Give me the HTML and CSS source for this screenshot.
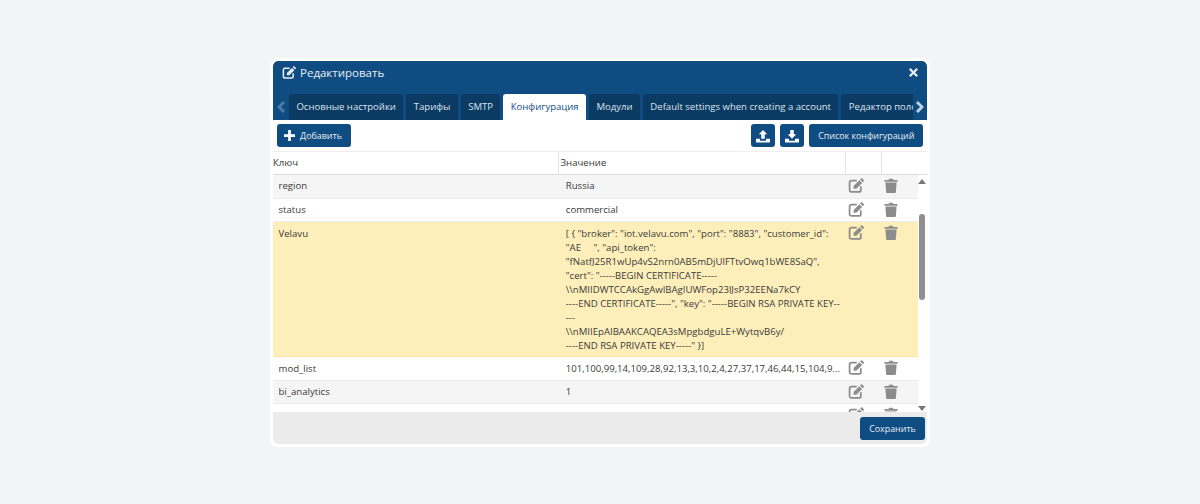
FILE: index.html
```html
<!DOCTYPE html>
<html lang="en">
<head>
  <meta charset="UTF-8">
  <meta name="viewport" content="width=device-width, initial-scale=1.0">
  <title>Редактировать</title>
  <link rel="stylesheet" href="styles.css">
</head>
<body>
  <svg class="defs" width="0" height="0">
    <symbol id="i-edit" viewBox="0 0 20 18">
      <path d="M11 3H4.200A2.200 2.200 0 0 0 2 5.200v9.600A2.200 2.200 0 0 0 4.200 17h9.600a2.200 2.200 0 0 0 2.200-2.200V10" fill="none" stroke="currentColor" stroke-width="2.200"/>
      <path d="M7 9.600V13h3.400l7.200-7.200-3.400-3.400zM15.200 1.400l3.400 3.400 1-1c.5-.5.5-1.100 0-1.600L17.800.400c-.5-.5-1.100-.5-1.600 0z" fill="currentColor"/>
    </symbol>
    <symbol id="i-trash" viewBox="0 0 14 16">
      <path d="M0 2.200h4.400L5 .8h4l.6 1.400H14v1.700H0zM1 4.900h12l-.8 10c0 .6-.5 1.100-1.100 1.100H2.900c-.6 0-1.100-.5-1.100-1.100z" fill="currentColor"/>
    </symbol>
    <symbol id="i-upload" viewBox="0 0 16 16">
      <path d="M8 1l4.800 5H10v5H6V6H3.200zM0 11h4.500v1.500c0 .6.400 1 1 1h5c.6 0 1-.4 1-1V11H16v4.500H0z" fill="currentColor"/>
    </symbol>
    <symbol id="i-download" viewBox="0 0 16 16">
      <path d="M6 1h4v5h2.800L8 11 3.200 6H6zM0 11h4.500v1.500c0 .6.400 1 1 1h5c.6 0 1-.4 1-1V11H16v4.500H0z" fill="currentColor"/>
    </symbol>
  </svg>

  <div class="modal">
    <div class="modal-head">
      <div class="modal-title">
        <svg class="title-icon"><use href="#i-edit"/></svg>
        <span>Редактировать</span>
      </div>
      <svg class="close-icon" viewBox="0 0 10 10"><path d="M1.800 0L5 3.200 8.200 0 10 1.800 6.800 5 10 8.200 8.200 10 5 6.800 1.800 10 0 8.200 3.200 5 0 1.800z" fill="currentColor"/></svg>
    </div>

    <div class="tabs">
      <svg class="tab-arrow dim" viewBox="0 0 8 12"><path d="M6 0l2 2-4 4 4 4-2 2-6-6z" fill="currentColor"/></svg>
      <div class="tab-list">
        <div class="tab">Основные настройки</div>
        <div class="tab">Тарифы</div>
        <div class="tab">SMTP</div>
        <div class="tab active">Конфигурация</div>
        <div class="tab">Модули</div>
        <div class="tab">Default settings when creating a account</div>
        <div class="tab">Редактор полей</div>
      </div>
      <svg class="tab-arrow next" viewBox="0 0 8 12"><path d="M2 0L0 2l4 4-4 4 2 2 6-6z" fill="currentColor"/></svg>
    </div>

    <div class="toolbar">
      <button class="btn btn-add">
        <svg class="plus-icon" viewBox="0 0 12 12"><path d="M4.500 0h3v4.500H12v3H7.500V12h-3V7.500H0v-3h4.500z" fill="currentColor"/></svg>
        Добавить
      </button>
      <div class="toolbar-right">
        <button class="btn btn-icon"><svg><use href="#i-upload"/></svg></button>
        <button class="btn btn-icon"><svg><use href="#i-download"/></svg></button>
        <button class="btn btn-list">Список конфигураций</button>
      </div>
    </div>

    <div class="table-head">
      <div class="th th-key">Ключ</div>
      <div class="th th-val">Значение</div>
      <div class="th th-act"></div>
      <div class="th th-act"></div>
    </div>

    <div class="table-body">
      <div class="rows">
        <div class="row odd">
          <div class="cell key">region</div>
          <div class="cell val">Russia</div>
          <div class="cell act"><svg class="edit"><use href="#i-edit"/></svg></div>
          <div class="cell act"><svg class="trash"><use href="#i-trash"/></svg></div>
        </div>
        <div class="row">
          <div class="cell key">status</div>
          <div class="cell val">commercial</div>
          <div class="cell act"><svg class="edit"><use href="#i-edit"/></svg></div>
          <div class="cell act"><svg class="trash"><use href="#i-trash"/></svg></div>
        </div>
        <div class="row warn">
          <div class="cell key">Velavu</div>
          <div class="cell val multi">[ { "broker": "iot.velavu.com", "port": "8883", "customer_id":
"AE     ", "api_token":
"fNatfJ25R1wUp4vS2nrn0AB5mDjUlFTtvOwq1bWE8SaQ",
"cert": "-----BEGIN CERTIFICATE-----
\\nMIIDWTCCAkGgAwIBAgIUWFop23lJsP32EENa7kCY
----END CERTIFICATE-----", "key": "-----BEGIN RSA PRIVATE KEY--
---
\\nMIIEpAIBAAKCAQEA3sMpgbdguLE+WytqvB6y/
----END RSA PRIVATE KEY-----" }]</div>
          <div class="cell act"><svg class="edit"><use href="#i-edit"/></svg></div>
          <div class="cell act"><svg class="trash"><use href="#i-trash"/></svg></div>
        </div>
        <div class="row">
          <div class="cell key">mod_list</div>
          <div class="cell val">101,100,99,14,109,28,92,13,3,10,2,4,27,37,17,46,44,15,104,9...</div>
          <div class="cell act"><svg class="edit"><use href="#i-edit"/></svg></div>
          <div class="cell act"><svg class="trash"><use href="#i-trash"/></svg></div>
        </div>
        <div class="row odd">
          <div class="cell key">bi_analytics</div>
          <div class="cell val">1</div>
          <div class="cell act"><svg class="edit"><use href="#i-edit"/></svg></div>
          <div class="cell act"><svg class="trash"><use href="#i-trash"/></svg></div>
        </div>
        <div class="row">
          <div class="cell key"></div>
          <div class="cell val"></div>
          <div class="cell act"><svg class="edit"><use href="#i-edit"/></svg></div>
          <div class="cell act"><svg class="trash"><use href="#i-trash"/></svg></div>
        </div>
      </div>
      <div class="scrollbar">
        <div class="sb-up"></div>
        <div class="sb-track"><div class="sb-thumb"></div></div>
        <div class="sb-down"></div>
      </div>
    </div>

    <div class="modal-foot">
      <button class="btn btn-save">Сохранить</button>
    </div>
  </div>
</body>
</html>
```

FILE: styles.css
```css
* {
  box-sizing: border-box;
}
html, body {
  height: 100%;
}
body {
  margin: 0;
  background: #f3f4f6;
  font-family: "Open Sans", "Noto Sans", sans-serif;
  font-size: 9.600px;
  color: #3a3a3a;
  display: flex;
  align-items: center;
  justify-content: center;
}
.defs {
  display: none;
}
.modal {
  width: 660px;
  height: 389px;
  background: #fff;
  border: 3px solid #fff;
  border-radius: 8px;
  display: flex;
  flex-direction: column;
  overflow: hidden;
}
.modal-head {
  height: 32.500px;
  flex: none;
  background: #0f4c81;
  border-radius: 5px 5px 0 0;
  color: #fff;
  display: flex;
  align-items: center;
  justify-content: space-between;
  padding: 0 9px 8px 9px;
}
.modal-title {
  display: flex;
  align-items: center;
  gap: 4px;
  font-size: 11.500px;
  color: #e8eef4;
}
.title-icon {
  width: 14px;
  height: 13px;
}
.close-icon {
  width: 9px;
  height: 9px;
  color: #e8eef4;
}
.tabs {
  height: 27px;
  flex: none;
  background: #0f4c81;
  display: flex;
  align-items: flex-end;
  overflow: hidden;
}
.tab-arrow {
  width: 16px;
  height: 12px;
  flex: none;
  align-self: center;
  color: #c5d3e0;
}
.tab-arrow.dim {
  color: #4d7ba3;
}
.tab-arrow.next {
  width: 14px;
}
.tab-list {
  flex: 1;
  display: flex;
  gap: 3px;
  overflow: hidden;
  min-width: 0;
}
.tab {
  flex: none;
  height: 26px;
  line-height: 25px;
  padding: 0 7.400px;
  background: #0b3a63;
  color: #dbe4ec;
  border-radius: 3px 3px 0 0;
  font-size: 9.550px;
  white-space: nowrap;
}
.tab.active {
  background: #fff;
  color: #0f4c81;
}
.toolbar {
  height: 32px;
  flex: none;
  display: flex;
  align-items: center;
  justify-content: space-between;
  padding: 0 3.700px 0 4px;
  border-bottom: 1px solid #eee;
}
.toolbar-right {
  display: flex;
  gap: 5.500px;
}
.btn {
  height: 23px;
  border: none;
  border-radius: 3px;
  background: #0f4c81;
  color: #e8eef4;
  font-family: inherit;
  font-size: 8.900px;
  padding: 0;
  display: inline-flex;
  align-items: center;
  justify-content: center;
}
.btn-add {
  width: 74px;
  gap: 5px;
  padding-right: 2px;
}
.plus-icon {
  width: 11px;
  height: 11px;
  color: #fff;
}
.btn-icon {
  width: 23.500px;
  color: #fff;
}
.btn-icon svg {
  width: 14px;
  height: 14px;
}
.btn-list {
  width: 114px;
}
.table-head {
  height: 23px;
  flex: none;
  display: flex;
  border-bottom: 1px solid #ddd;
  background: #fff;
}
.th {
  line-height: 22px;
  border-right: 1px solid #e4e4e4;
}
.th-key {
  width: 285.500px;
}
.th-val {
  width: 287.500px;
  padding-left: 2px;
}
.th-act {
  width: 36px;
}
.th-act:last-child {
  border-right: none;
  flex: 1;
}
.table-body {
  flex: 1;
  min-height: 0;
  display: flex;
  overflow: hidden;
}
.rows {
  flex: 1;
  min-width: 0;
  overflow: hidden;
}
.row {
  display: flex;
  height: 23.600px;
  border-bottom: 1px solid #ececec;
}
.row.odd {
  background: #f5f5f5;
}
.row.warn {
  height: 135px;
  background: #feefba;
  border-bottom-color: #fbe7a4;
}
.cell {
  padding: 4.400px 5.500px 0;
  line-height: 14px;
}
.key {
  width: 285.500px;
}
.val {
  width: 287.500px;
  padding-left: 7.500px;
  padding-right: 0;
  white-space: nowrap;
  overflow: hidden;
}
.multi {
  white-space: pre;
}
.act {
  width: 36px;
  padding: 3px 0 0 2px;
  color: #8c8c8c;
}
.edit {
  width: 16px;
  height: 15px;
  display: block;
}
.trash {
  width: 14px;
  height: 15px;
  display: block;
}
.scrollbar {
  width: 9.500px;
  flex: none;
  background: #fff;
  display: flex;
  flex-direction: column;
  align-items: center;
  padding: 3.500px 0 1.500px;
}
.sb-up, .sb-down {
  width: 0;
  height: 0;
  flex: none;
  border-left: 4px solid transparent;
  border-right: 4px solid transparent;
}
.sb-up {
  border-bottom: 5px solid #777;
}
.sb-down {
  border-top: 5px solid #777;
}
.sb-track {
  flex: 1;
  width: 100%;
  padding-top: 30px;
}
.sb-thumb {
  width: 6px;
  height: 86px;
  margin: 0 auto;
  background: #8f8f8f;
  border-radius: 3px;
}
.modal-foot {
  height: 31.300px;
  flex: none;
  background: #ebebeb;
  border-radius: 0 0 5px 5px;
  display: flex;
  align-items: center;
  justify-content: flex-end;
  padding: 1px 2px 0 0;
}
.btn-save {
  width: 65px;
}
```
